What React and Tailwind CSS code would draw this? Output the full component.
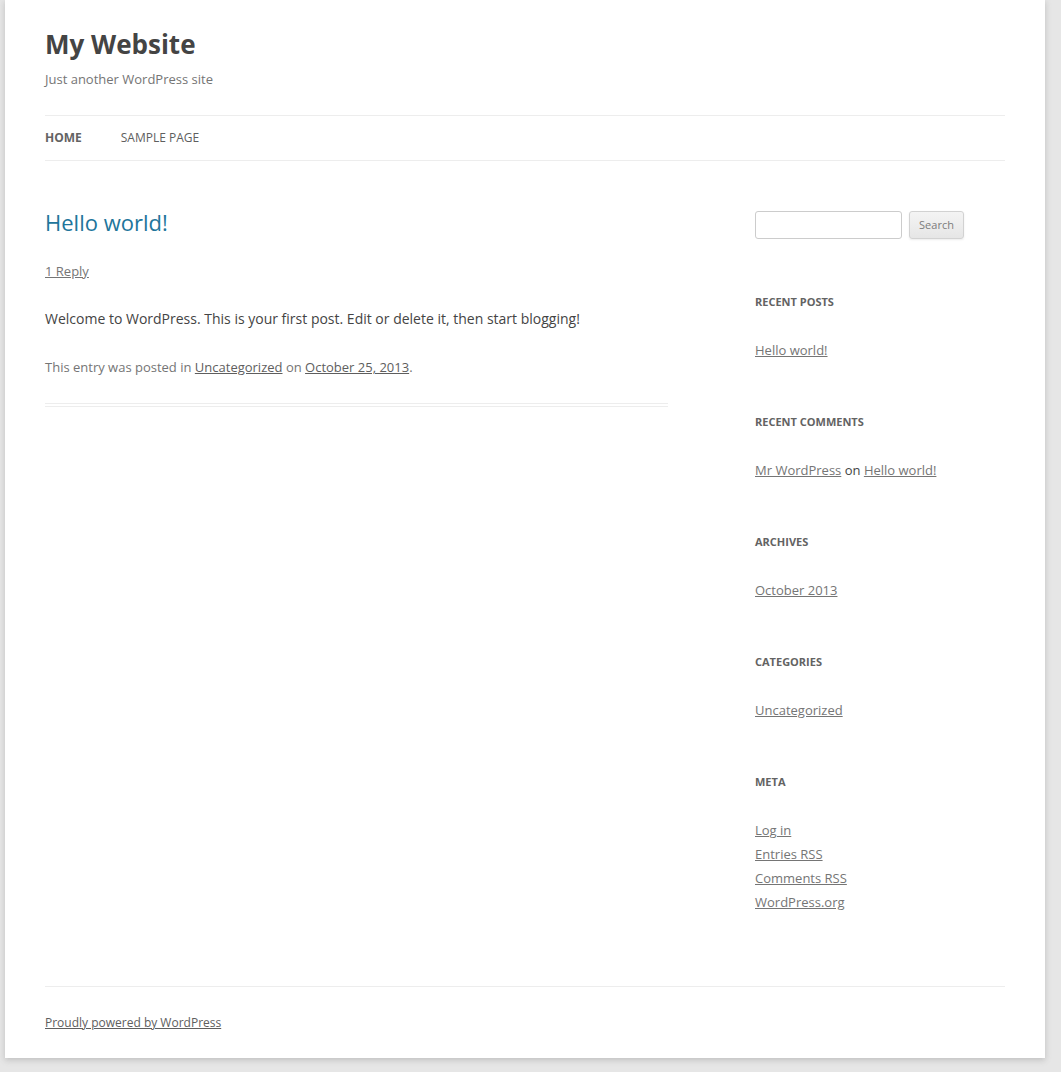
import React from 'react';

const font = { fontFamily: '"Open Sans", "Noto Sans", sans-serif' };

function Widget({ title, children, first }) {
    return (
        <section className={first ? 'mt-[51px]' : 'mt-[48px]'}>
            <h3 className="text-[11px] font-bold uppercase leading-[24px] text-[#636363]">{title}</h3>
            <ul className="mt-[24px] text-[13px] leading-[24px] text-[#757575]">{children}</ul>
        </section>
    );
}

function App() {
    return (
        <div className="min-h-screen bg-[#e6e6e6]" style={font}>
            <div className="ml-[5px] w-[1040px] h-[1058px] bg-white px-10 shadow-[0_2px_6px_rgba(100,100,100,0.3)]">
                <header>
                    <h1 className="pt-[26px] text-[26px] font-bold leading-[36px] text-[#444]">My Website</h1>
                    <p className="mt-[5px] text-[13px] leading-[24px] text-[#757575]">Just another WordPress site</p>
                    <nav className="mt-[24px] border-y border-[#ededed] h-[46px] flex items-center gap-[39px] text-[12px] uppercase text-[#5e5e5e]">
                        <span className="font-bold text-[#636363]">Home</span>
                        <span>Sample Page</span>
                    </nav>
                </header>

                <div className="flex h-[825px]">
                    <main className="w-[623px]">
                        <h2 className="mt-[46px] text-[22px] leading-[30px] text-[#21759b]">Hello world!</h2>
                        <p className="mt-[22px] text-[13px] leading-[24px] text-[#757575] underline">1 Reply</p>
                        <p className="mt-[24px] text-[14px] leading-[24px] text-[#444]">
                            Welcome to WordPress. This is your first post. Edit or delete it, then start blogging!
                        </p>
                        <p className="mt-[24px] text-[13px] leading-[24px] text-[#757575]">
                            This entry was posted in <span className="underline text-[#5e5e5e]">Uncategorized</span> on{' '}
                            <span className="underline text-[#5e5e5e]">October 25, 2013</span>.
                        </p>
                        <div className="mt-[24px] h-px bg-[#ededed]" />
                        <div className="mt-[2px] h-px bg-[#ededed]" />
                    </main>

                    <aside className="ml-[87px] w-[250px]">
                        <form className="mt-[50px] flex gap-[7px]">
                            <input className="w-[147px] h-[28px] border border-[#ccc] rounded-[3px] bg-white" />
                            <button type="button" className="w-[55px] h-[28px] pt-px border border-[#d2d2d2] rounded-[3px] bg-gradient-to-b from-[#f4f4f4] to-[#e6e6e6] text-[11px] text-[#7c7c7c] shadow-[0_1px_2px_rgba(64,64,64,0.1)]">
                                Search
                            </button>
                        </form>

                        <Widget title="Recent Posts" first>
                            <li className="underline">Hello world!</li>
                        </Widget>
                        <Widget title="Recent Comments">
                            <li><span className="underline">Mr WordPress</span> <span className="text-[#444]">on</span> <span className="underline">Hello world!</span></li>
                        </Widget>
                        <Widget title="Archives">
                            <li className="underline">October 2013</li>
                        </Widget>
                        <Widget title="Categories">
                            <li className="underline">Uncategorized</li>
                        </Widget>
                        <Widget title="Meta">
                            <li className="underline">Log in</li>
                            <li className="underline">Entries RSS</li>
                            <li className="underline">Comments RSS</li>
                            <li className="underline">WordPress.org</li>
                        </Widget>
                    </aside>
                </div>

                <footer className="border-t border-[#ededed] pt-[24px] text-[12px] leading-[24px] text-[#5e5e5e]">
                    <span className="underline">Proudly powered by WordPress</span>
                </footer>
            </div>
        </div>
    );
}

export default App;
